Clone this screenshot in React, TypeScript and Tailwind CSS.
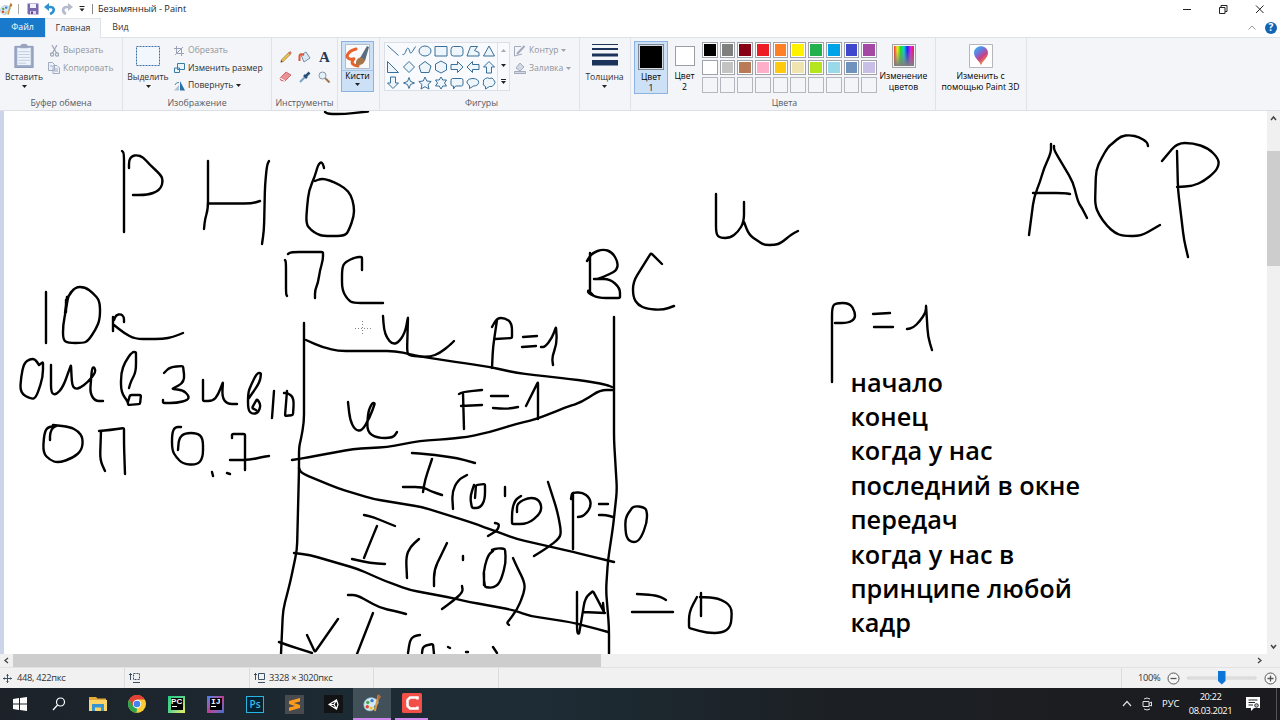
import type { ReactNode } from 'react';

const strokes = [
  'M325 112L328 114H345L368 111.5',
  // PH6
  'M122 151L124 153V232M129 168V160L132 156L137 155L143 157L150 165L161 175L163 181L161 188L156 192L150 194L144 195H133',
  'M208 161V209L205 219L204 229M209 203.5H252L260 201M269 161L267 165L265 185L264 230L262 244',
  'M324 168L323 164L321 162L318 165L315 176L309 190L307 207L306 224L311 230L317 234L323 236H345L349 230L354 216V206L351 195L345 188L334 182L325 179H320L315 181',
  // left column notes
  'M46 292V343M68 297L75 287H85L93 293L100 301V319L96 329L88 341L83 343H68L63 340V325L66 310L68 297L71 292M66 300V312M67 297L65 313',
  'M113 317V331M114 320L116 315L121 314L124 317V322M114 325L124 333L135 339H163L173 337L183 333',
  'M39 365L43 362V377L36 398L31 399L20 393L21 377L24 363L30 359H35L39 365',
  'M51 365V393L56 395L63 387L71 365L72 385L75 389L80 388L88 382L96 372L94 367L92 368L91 380L90 393L95 401H103',
  'M129 388L131 381L136 372V352H132L125 362L121 373V392L128 402V405L140 404L141 395H130L128 402',
  'M164 373L170 367L183 366L185 382L172 389L183 390L189 396L188 400L177 403H163V400',
  'M203 380V401H213L218 395L223 382L222 397L227 404H237',
  'M249 398L260 382L261 373H257L251 385L248 393V410L252 414L258 413L261 405L257 399L252 408L256 410',
  'M274 391L272 418M287 391L285 416L293 415L294 398L288 393H284',
  'M50 440V433L53 427L57 426L47 427L44 435L43 453L50 460L58 463L73 458L82 450L83 438L78 431L70 427L53 425',
  'M99 431L110 430L124 428V445L125 474M101 431L100 460L105 471',
  'M181 427H175L172 433V450L176 457L183 464L197 465L203 458V438L197 433H185L179 438L178 450',
  'M212 472L213 476M227 473L230 474M232 438V434H245V470M230 460H250L262 457L269 456',
  // headings
  'M288 254L291 252H323V260L320 270L318 283L315 290V298M285 260L286 262V294L287 296',
  'M362 270V257H356L345 262L342 268V290L348 300L353 303H383',
  'M590 253V293M587 261L592 253L603 249L612 252L618 262L617 270L610 274L598 279H594M598 279H610L620 288V298H598L588 293V290L593 295',
  'M662 264L651 253L633 282V297L638 305L647 309L663 310L674 306',
  // time axes
  'M304 323V422L301 439L299 447V470L297 550L290 583L283 610L281 654',
  'M614 317V440L617 490L613 527L608 560L606 590L609 627V654',
  // frames
  'M306 340L322 347L338 351H395L423 357L463 363L490 367L517 373L543 376L570 379L593 382L607 385L612 387',
  'M613 390H600L582 402L564 408L537 419L516 424L490 432L467 437L447 439L420 441L387 447L353 449L310 457L292 460',
  'M383 316L384 330L387 338L392 344L398 343L405 333L408 317L407 353L410 356L430 357L440 353L450 345L454 341',
  'M492 327L497 318H505L512 323V338L495 339M497 320L493 347L492 368M523 337L537 336M522 347L536 346M541 347H545L552 338L556 327L557 343L552 357L553 365',
  'M459 394L463 392L482 390M463 393L464 429M461 406L482 405M491 396H508M493 408L507 409L518 407M526 406L538 382V419',
  'M348 402L350 420L355 430L362 431L370 417L375 403H372L368 412L367 432L377 438H393L397 432',
  'M412 453L427 454L457 458L475 463M432 459L425 480L423 492M403 487H423L430 491L442 495',
  'M299 468L301 473L337 488L373 499L422 507L470 522L492 530L517 539L573 552L614 562',
  'M467 475L458 480L452 492L453 509M475 498L476 485L485 484V500L480 508H472L470 497L474 485M505 487V496M495 523L499 524L498 530L488 536',
  'M517 512V503L530 497L540 500L542 512L528 524H512V510L515 500L521 496',
  'M548 482L557 510L561 530L560 538L547 548L534 556',
  'M573 493V549M571 499L572 493L582 492L590 498L591 507L584 516L578 517M599 504H608M599 515H606L613 517',
  'M632 508L635 506L643 507L647 510V523L640 540L633 543L626 538L625 518L632 508',
  'M364 515L373 517L385 522L395 526M377 526L370 543L364 558M352 559L370 563L385 564',
  'M419 539L410 547L406 557L407 578M447 543L434 570V586M463 556V560M462 586L463 592L453 601L442 609',
  'M492 550L498 548L505 549L506 563L500 583L493 588L485 587L483 573L488 555L493 551M484 573V585',
  'M513 558L517 567L525 583L524 593L517 610L507 623L509 625',
  'M294 553L310 555L358 569L385 581L410 590L447 597L470 602L513 610L530 616L570 622L590 627L608 632',
  'M348 595H357L380 608L395 611L406 614M373 613L357 654M307 635L315 652L338 619M279 642L290 646L312 653',
  'M420 635L414 636L410 640L408 653M422 653L423 646L433 644L434 654M448 647L450 648M466 652H468M493 647L497 653',
  'M577 592V633L579 634L582 617L585 598L593 591L604 612L603 603M583 612L605 613',
  'M637 594L653 595L661 597L666 600M632 612H673M701 593V616M700 597L718 598L732 606L731 627L722 633L707 633L689 628V612L697 597',
  // right-hand side
  'M716 194V234L720 238H730L738 232L744 222V202M744 222L749 235L758 241L764 245H775L781 243L792 234L798 231',
  'M1029 235L1034 197L1040 182L1044 168L1051 153V144M1054 146V150L1073 182L1078 202L1082 208L1087 218M1033 193H1064L1070 194',
  'M1148 146L1147 142L1139 137L1130 135L1121 136L1113 143L1108 147L1101 159L1096 170L1095 205L1099 215L1107 226L1115 233L1123 236H1141L1160 225',
  'M1162 161L1177 143H1193L1208 148L1218 158L1219 165L1215 172L1204 181L1193 186L1177 187M1177 151L1178 190L1184 240L1188 257',
  'M832 382V308L835 303H850L855 312V319L848 323H835M873 314L890 313M874 327H893M907 329L913 328L920 321L926 312V305L928 337L932 350',
];

// rounds the joints of a polyline, sharp turns stay sharp
const smooth = (d: string) =>
  d.split('M').filter(Boolean).map((part) => {
    const pts: number[][] = [];
    for (const [, cmd, a, b] of ('L' + part).matchAll(/([LHV])([\d.]+)(?: ([\d.]+))?/g)) {
      const last = pts[pts.length - 1];
      if (cmd === 'L') pts.push([+a, +b]);
      if (cmd === 'H') pts.push([+a, last[1]]);
      if (cmd === 'V') pts.push([last[0], +a]);
    }
    let out = `M${pts[0][0]} ${pts[0][1]}`;
    for (let i = 1; i < pts.length - 1; i++) {
      const [px, py] = pts[i - 1];
      const [x, y] = pts[i];
      const [nx, ny] = pts[i + 1];
      const la = Math.hypot(x - px, y - py);
      const lb = Math.hypot(nx - x, ny - y);
      const cos = ((x - px) * (nx - x) + (y - py) * (ny - y)) / (la * lb);
      const reach = cos > 0.3 ? 8 : 1.5;
      const ta = Math.min(reach, la / 2) / la;
      const tb = Math.min(reach, lb / 2) / lb;
      out += `L${x + (px - x) * ta} ${y + (py - y) * ta}Q${x} ${y} ${x + (nx - x) * tb} ${y + (ny - y) * tb}`;
    }
    const end = pts[pts.length - 1];
    return out + `L${end[0]} ${end[1]}`;
  }).join('');

const notes = ['начало', 'конец', 'когда у нас', 'последний в окне', 'передач', 'когда у нас в', 'принципе любой', 'кадр'];

const palette = [
  '#000000', '#7f7f7f', '#880015', '#ed1c24', '#ff7f27', '#fff200', '#22b14c', '#00a2e8', '#3f48cc', '#a349a4',
  '#ffffff', '#c3c3c3', '#b97a57', '#ffaec9', '#ffc90e', '#efe4b0', '#b5e61d', '#99d9ea', '#7092be', '#c8bfe7',
];

const shapes = [
  'M2 2L13 12',
  'M1 11C5 12 4 3 7 5C9 8 8 12 11 8L14 3',
  'M1.5 7.5A6 5 0 1 0 13.5 7.5A6 5 0 1 0 1.5 7.5',
  'M1.5 3H13.5V12.5H1.5Z',
  'M4 3H11Q13.5 3 13.5 6V10Q13.5 12.5 11 12.5H4Q1.5 12.5 1.5 10V6Q1.5 3 4 3',
  'M5 3H12L9 7L13.5 9V12.5H1.5Z',
  'M7.5 2.5L13 12.5H2Z',
  'M2 2V13H13Z',
  'M7.5 2L13 7.5L7.5 13L2 7.5Z',
  'M7.5 2L13.5 6.5L11.5 13H3.5L1.5 6.5Z',
  'M7.5 1.5L13 4.5V10.5L7.5 13.5L2 10.5V4.5Z',
  'M1.5 5H8V2L13.5 7.5L8 13V10H1.5Z',
  'M13.5 5H7V2L1.5 7.5L7 13V10H13.5Z',
  'M5 13.5V7.5H2L7.5 2L13 7.5H10V13.5Z',
  'M5 1.5V7.5H2L7.5 13L13 7.5H10V1.5Z',
  'M7.5 2L9 6L13 7.5L9 9L7.5 13L6 9L2 7.5L6 6Z',
  'M7.5 1.5L9.3 5.5L13.7 6L10.5 9L11.5 13.5L7.5 11.2L3.5 13.5L4.5 9L1.3 6L5.7 5.5Z',
  'M7.5 1.5L9.3 4.5H13L11 7.5L13 10.5H9.3L7.5 13.5L5.7 10.5H2L4 7.5L2 4.5H5.7Z',
  'M3 3H12Q13.5 3 13.5 5V8.5Q13.5 10.5 12 10.5H6L4 13.5V10.5H3Q1.5 10.5 1.5 8.5V5Q1.5 3 3 3',
  'M4 10C-1 7 2 3 7.5 3C15 3 15 10.5 8 10.5L4 13Z',
  'M4 3Q6 1.5 8 3Q11 1.5 12 4Q15 7 12.5 9Q11 12 8 11L4 13.5V11Q.5 10 2 7Q1 4 4 3',
];

const Caret = ({ color = '#222' }: { color?: string }) => (
  <svg width="5" height="3" viewBox="0 0 5 3"><path d="M0 0H5L2.5 3Z" fill={color} /></svg>
);

const Group = ({ label, className, children }: { label?: string; className: string; children: ReactNode }) => (
  <div className={`flex h-full shrink-0 flex-col border-r border-[#dfe2e8] pt-[4px] ${className}`}>
    <div className="flex h-[55px]">{children}</div>
    <div className="h-[12px] text-center text-[8.8px] leading-[12px] text-[#555a62]">{label}</div>
  </div>
);

const Row = ({ icon, text, off, caret }: { icon: ReactNode; text: string; off?: boolean; caret?: boolean }) => (
  <div className={`flex h-[17.5px] items-center gap-[3px] whitespace-nowrap ${off ? 'text-[#92959e]' : 'text-[#2d3036]'}`}>
    <span className="flex w-[12px] justify-center">{icon}</span>
    <span>{text}</span>
    {caret && <Caret color={off ? '#a0a3aa' : '#222'} />}
  </div>
);

const Palette = ({ size }: { size: number }) => (
  <svg width={size} height={size} viewBox="0 0 20 20">
    <path d="M1 13C0 7 5 3 10 4C15 5 18 9 15 11C12 12 11 12 12 15C11 19 2 19 1 13Z" fill="#d3e8f3" stroke="#8ab0c4" strokeWidth=".7" />
    <circle cx="5" cy="9" r="1.8" fill="#4da64d" />
    <circle cx="9.5" cy="7" r="1.8" fill="#3979cf" />
    <circle cx="4.5" cy="13.5" r="1.8" fill="#dd4436" />
    <circle cx="8.500" cy="14.8" r="1.7" fill="#efc02c" />
    <path d="M16.5 1L12.5 18" stroke="#d89545" strokeWidth="2.2" />
    <path d="M15 5L16.5 0L19 3L17 6Z" fill="#b56c37" />
  </svg>
);

const TitleBar = () => (
  <div className="flex h-[18px] items-center bg-white pr-[14px]">
    <div className="flex w-[98px] items-center">
      <Palette size={13} />
      <div className="ml-[5px] h-[10px] w-px bg-[#aaa]" />
      <svg className="ml-[8px]" width="12" height="12" viewBox="0 0 12 12">
        <path d="M.5 .5H11.5V11.5H1.5L.5 10.5Z" fill="#7a68ad" />
        <path d="M3 1H9V5H3Z" fill="#f4f2fa" />
        <path d="M3 8H9V11.5H3Z" fill="#d8d2ea" />
        <path d="M4 8.5H6V11H4Z" fill="#5a4a88" />
      </svg>
      <svg className="ml-[5px]" width="12" height="12" viewBox="0 0 12 12">
        <path d="M3 4H6C11 4 11 9 6 11" fill="none" stroke="#2e92d0" strokeWidth="2.6" />
        <path d="M0 4L5 0V8Z" fill="#2e92d0" />
      </svg>
      <svg className="ml-[5px]" width="12" height="12" viewBox="0 0 12 12">
        <path d="M9 4H6C1 4 1 9 5 11" fill="none" stroke="#b4bccb" strokeWidth="2.6" />
        <path d="M12 4L7 0V8Z" fill="#b4bccb" />
      </svg>
      <svg className="ml-[6px]" width="6" height="6" viewBox="0 0 6 6"><path d="M.5 .5H5.500" stroke="#222" /><path d="M.5 2.5H5.5L3 5.5Z" fill="#222" /></svg>
      <div className="ml-[7px] h-[10px] w-px bg-[#888]" />
    </div>
    <div className="flex-1 text-[9.2px] leading-[18px] text-[#1d1d1d]">Безымянный - Paint</div>
    <svg width="84" height="10" viewBox="0 0 84 10" fill="none" stroke="#222" strokeWidth="1">
      <path d="M1 5.5H9M37.5 3.5H43V9.5H37.5ZM39 3.5V1.5H45V7.5H43M74 1.5L81.5 9M81.5 1.5L74 9" />
    </svg>
  </div>
);

const Tabs = () => (
  <div className="flex h-[20px] items-end border-b border-[#dfe2e8] bg-white text-[8.8px] leading-[19px]">
    <div className="h-[19px] w-[45px] bg-[#1979ca] text-center text-white">Файл</div>
    <div className="-mb-px h-[20px] w-[56px] border-x border-t border-[#dfe2e8] bg-[#f5f6f9] text-center text-[#333]">Главная</div>
    <div className="h-[19px] w-[39px] text-center text-[#333]">Вид</div>
    <div className="flex h-[19px] flex-1 items-center justify-end gap-[9px] pr-[3px]">
      <svg width="8" height="5" viewBox="0 0 8 5" fill="none" stroke="#999"><path d="M.5 4.5L4 1L7.5 4.5" /></svg>
      <div className="flex h-[12px] w-[12px] items-center justify-center rounded-full bg-[#1464b4] text-[10px] font-bold text-white">?</div>
    </div>
  </div>
);

const Ribbon = () => (
  <div className="flex h-[73px] border-b border-[#dcdfe5] bg-[#f4f5f8] text-[8.6px] leading-[11px]">
    <Group label="Буфер обмена" className="w-[123px]">
      <div className="flex w-[48px] flex-col items-center">
        <svg className="mt-px" width="20" height="25" viewBox="0 0 20 26">
          <path d="M.5 3.5H19.5V25.5H.5Z" fill="#9ba9c6" stroke="#8d9ab8" />
          <path d="M3 5H17V23H3Z" fill="#eef3fb" />
          <path d="M6 3.5Q6 1 10 .8Q14 1 14 3.5V5.5H6Z" fill="#9aa5bd" />
          <path d="M4 9H16M4 12H16M4 15H16M4 18H16M4 21H12" stroke="#c1cce0" />
        </svg>
        <span className="mt-[4px] whitespace-nowrap text-[#2d3036]">Вставить</span>
        <span className="mt-[2px]"><Caret /></span>
      </div>
      <div>
        <Row off text="Вырезать" icon={
          <svg width="9" height="12" viewBox="0 0 9 12" fill="none" stroke="#9ea5b8" strokeWidth="1.2"><path d="M2 0L6.5 8M7 0L2.5 8" /><circle cx="2" cy="9.5" r="1.6" /><circle cx="7" cy="9.5" r="1.6" /></svg>
        } />
        <Row off text="Копировать" icon={
          <svg width="12" height="12" viewBox="0 0 12 12" fill="#edf1f8" stroke="#a0aac0"><path d="M.5 .5H4.5L6.5 2.5V8.5H.5ZM5 3.5H9L11.5 6V11.5H5Z" /><path d="M6.5 7H10M6.5 9H10M2 4H4" /></svg>
        } />
      </div>
    </Group>

    <Group label="Изображение" className="w-[149px]">
      <div className="flex w-[50px] flex-col items-center">
        <svg className="mt-[4px]" width="24" height="20" viewBox="0 0 24 20"><path d="M.5 .5H23.5V19.5H.5Z" fill="#f1f7fd" stroke="#3c6ea5" strokeDasharray="2 1" /></svg>
        <span className="mt-[6px] whitespace-nowrap text-[#2d3036]">Выделить</span>
        <span className="mt-[2px]"><Caret /></span>
      </div>
      <div>
        <Row off text="Обрезать" icon={
          <svg width="10" height="10" viewBox="0 0 10 10" fill="none" stroke="#9aa2b8"><path d="M2.5 0V7.5H10M0 2.5H7.5V10M1 9L9 1" /></svg>
        } />
        <Row text="Изменить размер" icon={
          <svg width="11" height="10" viewBox="0 0 11 10" fill="#e9f4fc" stroke="#3a7ca8"><path d="M3.5 .5H10.5V6.5H3.5ZM.5 5H5.5V9.5H.5Z" /></svg>
        } />
        <Row text="Повернуть" caret icon={
          <svg width="11" height="10" viewBox="0 0 11 10"><path d="M0 9.5L5 4V9.5Z" fill="#b3c2d0" /><path d="M6 0L11 9.5H6Z" fill="#2573ad" /><path d="M1 4Q2 1 5 1.5" fill="none" stroke="#58859f" /></svg>
        } />
      </div>
    </Group>

    <Group label="Инструменты" className="w-[66px]">
      <div className="grid h-[44px] w-[62px] grid-cols-3 place-items-center pl-[4px] pt-[4px]">
        <svg width="12" height="12" viewBox="0 0 12 12"><path d="M2 10L10 2" stroke="#8d7330" strokeWidth="3" /><path d="M2 10L10 2" stroke="#f1c550" strokeWidth="1.8" /><path d="M9 3L11 1" stroke="#cc7c77" strokeWidth="2.5" /><path d="M.5 11.5L1 9L3 11Z" fill="#4a4036" /></svg>
        <svg width="13" height="12" viewBox="0 0 13 12"><path d="M3 4L8 1L12 7L6 11Z" fill="#d9e8f3" stroke="#7291a9" /><path d="M1.5 10V5Q2 2 6 4" fill="none" stroke="#df5536" strokeWidth="2" /></svg>
        <span className="font-['Liberation_Serif'] text-[15px] font-bold leading-[14px] text-[#243956]">A</span>
        <svg width="13" height="11" viewBox="0 0 13 11"><path d="M1 7L7 1L12 4L6 10L2 9.5Z" fill="#eb9196" stroke="#ca6c72" /><path d="M1 7L6 10" stroke="#fff" /></svg>
        <svg width="12" height="12" viewBox="0 0 12 12"><path d="M1 11L7 5" stroke="#7aa4c4" strokeWidth="2" /><path d="M5 4L8 7M7 5L10.5 1.5" stroke="#25517a" strokeWidth="2.500" /></svg>
        <svg width="12" height="12" viewBox="0 0 12 12"><path d="M7 7L11.5 11.5" stroke="#a1764c" strokeWidth="2" /><circle cx="4.5" cy="4.5" r="3.5" fill="#e4f1fb" stroke="#8998a5" /></svg>
      </div>
    </Group>

    <Group className="w-[42px] pl-[3px]">
      <div className="mt-[-1px] flex h-[51px] w-[33px] flex-col items-center border border-[#8cb3df] bg-[#cce0f6]">
        <svg className="mt-[2px] shrink-0" width="25" height="25" viewBox="0 0 25 25">
          <path d="M.5 .5H24.5V24.5H.5Z" fill="#f9fafb" stroke="#b5bcc7" />
          <path d="M11 5C3 7 1 12 3 14C6 17 11 13 8 16Q5 21 13 22" fill="none" stroke="#e8612b" strokeWidth="3" strokeLinecap="round" />
          <path d="M15 14L22 2L24 3L20 17Z" fill="#596d80" />
          <path d="M11 21Q10 15 16 13L20 16Q19 22 11 21Z" fill="#a77447" />
        </svg>
        <span className="mt-[1px] w-full border-t border-[#a4c4e8] text-center">Кисти</span>
        <span className="mt-[1px]"><Caret /></span>
      </div>
    </Group>

    <Group label="Фигуры" className="w-[200px] pl-[4px]">
      <div className="flex h-[49px] w-[126px] border border-[#dbe0e8] bg-[#f8fafd]">
        <div className="grid w-[113px] grid-cols-7">
          {shapes.map((d) => (
            <svg key={d} width="16" height="16" viewBox="-.5 -.5 16 16" fill="#eef6fc" stroke="#396f98"><path d={d} /></svg>
          ))}
        </div>
        <div className="flex w-[12px] flex-col items-center justify-around border-l border-[#dbe0e8]">
          <span className="rotate-180"><Caret color="#aaa" /></span>
          <Caret />
          <span className="border-t border-[#222] pt-px"><Caret /></span>
        </div>
      </div>
      <div className="ml-[4px]">
        <Row off text="Контур" caret icon={
          <svg width="12" height="12" viewBox="0 0 12 12" fill="none" stroke="#a3aabb"><path d="M7 1.5H.5V11L8 9" /><path d="M3 9L10.5 1" strokeWidth="2" /></svg>
        } />
        <Row off text="Заливка" caret icon={
          <svg width="12" height="12" viewBox="0 0 12 12" fill="#d3d9e6" stroke="#a3aabb"><path d="M2 6L6 1L10 5L6 9ZM.5 9.5H11.5V11.5H.5Z" /></svg>
        } />
      </div>
    </Group>

    <Group className="w-[51px]">
      <div className="flex w-[49px] flex-col items-center">
        <svg className="mt-[2px]" width="26" height="22" viewBox="0 0 26 22" fill="#1b3259"><path d="M0 0H26V1H0ZM0 4H26V6H0ZM0 9.5H26V12.5H0ZM0 16H26V21.5H0Z" /></svg>
        <span className="mt-[6px] text-[#2d3036]">Толщина</span>
        <span className="mt-[2px]"><Caret /></span>
      </div>
    </Group>

    <Group label="Цвета" className="w-[305px] pl-[3px]">
      <div className="mt-[-1px] flex h-[53px] w-[34px] flex-col items-center border border-[#8cb3df] bg-[#cce0f6] pt-[2px]">
        <div className="h-[26px] w-[26px] shrink-0 border border-[#7e8794] bg-black outline-1 -outline-offset-2 outline-[#d5dbe2]" />
        <span className="mt-[2px] text-center leading-[10.5px]">Цвет<br />1</span>
      </div>
      <div className="flex w-[33px] flex-col items-center pt-[4px]">
        <div className="h-[20px] w-[20px] shrink-0 border border-[#999ea5] bg-white" />
        <span className="mt-[5px] text-center leading-[10.5px]">Цвет<br />2</span>
      </div>
      <div className="ml-[1px] grid h-[51px] w-[175px] grid-cols-10 grid-rows-3 gap-[2px]">
        {palette.map((color) => (
          <div key={color} className="border border-[#a0a4aa] bg-white p-px">
            <div className="h-full" style={{ background: color }} />
          </div>
        ))}
        {Array.from({ length: 10 }, (_, i) => <div key={i} className="border border-[#b4b8be]" />)}
      </div>
      <div className="flex w-[53px] flex-col items-center pt-[2px]">
        <div className="h-[24px] w-[24px] shrink-0 border border-[#a5a5a5] p-px">
          <div className="h-full bg-[linear-gradient(to_bottom,transparent_20%,#808080),linear-gradient(to_right,#e33,#ee2,#2d2,#1cd,#22e,#d2d,#e23)]" />
        </div>
        <span className="mt-[3px] text-center leading-[10.5px]">Изменение<br />цветов</span>
      </div>
    </Group>

    <Group className="w-[91px]">
      <div className="flex w-[89px] flex-col items-center pt-[2px]">
        <svg width="24" height="24" viewBox="0 0 24 24">
          <defs>
            <linearGradient id="drop" x1="0" y1="0" x2=".6" y2="1"><stop stopColor="#27c4ed" /><stop offset=".4" stopColor="#6e73dd" /><stop offset=".65" stopColor="#c84087" /><stop offset="1" stopColor="#fa9a27" /></linearGradient>
          </defs>
          <path d="M.5 .5H23.5V23.5H.5Z" fill="#fff" stroke="#b4b8be" />
          <path d="M12 21.5C11 17 5 14 5 9C5 0 19 0 19 9C19 14 13 17 12 21.5Z" fill="url(#drop)" />
        </svg>
        <span className="mt-[3px] whitespace-nowrap text-center leading-[10.5px]">Изменить с<br />помощью Paint 3D</span>
      </div>
    </Group>
  </div>
);

const Canvas = () => (
  <div className="flex h-[543px]">
    <div className="w-[4px] bg-[#ccd5e8]" />
    <div className="relative flex-1 overflow-hidden bg-white">
      <svg className="absolute inset-0" width="1263" height="543" viewBox="4 111 1263 543" fill="none" stroke="#000" strokeWidth="2.4" strokeLinecap="round" strokeLinejoin="round">
        {strokes.map((d) => <path key={d} d={smooth(d)} />)}
        <path d="M355 328.5H371M362.5 321V336" stroke="#888" strokeWidth="1" strokeLinecap="butt" strokeDasharray="1 2" />
      </svg>
      <div className="absolute left-[846.5px] top-[253.500px] whitespace-nowrap font-['Open_Sans','Noto_Sans',sans-serif] text-[25.3px] font-semibold leading-[34.4px] text-black">
        {notes.map((line) => <div key={line}>{line}</div>)}
      </div>
    </div>
    <div className="flex w-[13px] flex-col items-center justify-between bg-[#f0f0f0] py-[4px]">
      <svg width="7" height="6" viewBox="0 0 7 6" fill="none" stroke="#444" strokeWidth="1.5"><path d="M1 5L3.5 2L6 5" /></svg>
      <div className="mt-[30px] h-[115px] w-full bg-[#cdcdcd]" />
      <div className="flex-1" />
      <svg width="7" height="6" viewBox="0 0 7 6" fill="none" stroke="#444" strokeWidth="1.5"><path d="M1 1L3.5 4L6 1" /></svg>
    </div>
  </div>
);

const StatusBar = () => (
  <>
    <div className="flex h-[13px] items-center bg-[#f0f0f0]">
      <svg className="mx-[3px]" width="7" height="7" viewBox="0 0 7 7" fill="none" stroke="#444" strokeWidth="1.3"><path d="M5 1L2 3.5L5 6" /></svg>
      <div className="h-full w-[588px] bg-[#cdcdcd]" />
      <div className="flex-1" />
      <svg className="mr-[17px]" width="7" height="7" viewBox="0 0 7 7" fill="none" stroke="#444" strokeWidth="1.3"><path d="M2 1L5 3.5L2 6" /></svg>
    </div>
    <div className="flex h-[21px] items-center border-t border-[#e2e2e2] bg-[#f1f1f1] text-[9.3px] tracking-[-0.3px] text-[#333]">
      <div className="flex h-full w-[125px] items-center gap-[5px] border-r border-[#dcdcdc] pl-[3px]">
        <svg width="9" height="9" viewBox="0 0 9 9" fill="none" stroke="#3c5066"><path d="M4.5 0V9M0 4.5H9M3.5 1.5H5.5M3.5 7.5H5.5M1.5 3.5V5.5M7.5 3.5V5.5" /></svg>
        <span>448, 422пкс</span>
      </div>
      <div className="flex h-full w-[125px] items-center border-r border-[#dcdcdc] pl-[4px]">
        <svg width="11" height="10" viewBox="0 0 11 10" fill="none" stroke="#3c5066"><path d="M1.5 0V7M0 1.5H3M4 9.5H11" /><path d="M4.5 .5H10.5V6.5H4.5Z" strokeDasharray="2 1" /></svg>
      </div>
      <div className="flex h-full w-[124px] items-center gap-[4px] border-r border-[#dcdcdc] pl-[4px]">
        <svg width="11" height="10" viewBox="0 0 11 10" fill="none" stroke="#3c5066"><path d="M1.5 0V7M0 1.5H3M4 9.5H11M4.5 .5H10.5V6.5H4.5Z" /></svg>
        <span>3328 × 3020пкс</span>
      </div>
      <div className="h-full w-[125px] border-r border-[#dcdcdc]" />
      <div className="h-full flex-1 border-r border-[#dcdcdc]" />
      <div className="flex h-full w-[158px] items-center pl-[16px]">
        <span className="w-[29px]">100%</span>
        <svg width="13" height="13" viewBox="0 0 13 13" fill="#f8f8f8" stroke="#555"><circle cx="6.5" cy="6.5" r="5.5" /><path d="M3.5 6.5H9.5" strokeWidth="1.3" /></svg>
        <svg className="ml-[7px]" width="70" height="14" viewBox="0 0 70 14"><path d="M.5 6H69V8H.5Z" fill="#e8e8e8" stroke="#d2d2d2" /><path d="M31 0H38.5V10L34.75 13.5L31 10Z" fill="#0c76d6" /></svg>
        <svg className="ml-[7px]" width="13" height="13" viewBox="0 0 13 13" fill="#f8f8f8" stroke="#555"><circle cx="6.5" cy="6.5" r="5.5" /><path d="M3.5 6.5H9.5M6.5 3.5V9.5" strokeWidth="1.3" /></svg>
      </div>
    </div>
  </>
);

const Task = ({ children }: { children: ReactNode }) => (
  <div className="flex h-full w-[39.25px] items-center justify-center">{children}</div>
);

const Taskbar = () => (
  <div className="flex h-[32px] bg-[linear-gradient(to_right,#1d2229,#1c2b34_30%,#1d2c35_42%,#1c2024_65%,#1b1b1f)] text-[9.3px] text-white">
    <Task><svg width="14" height="14" viewBox="0 0 14 14" fill="#fff"><path d="M0 2L6 1V6.5H0ZM7 .9L14 0V6.5H7ZM0 7.5H6V13L0 12ZM7 7.5H14V14L7 13Z" /></svg></Task>
    <Task><svg width="14" height="14" viewBox="0 0 14 14" fill="none" stroke="#fff" strokeWidth="1.2"><circle cx="8.5" cy="5" r="4" /><path d="M5.5 8L1 13" /></svg></Task>
    <Task><svg width="18" height="16" viewBox="0 0 18 16"><path d="M0 1H7L8.5 2.5H17V15H0Z" fill="#e6aa36" /><path d="M0 4H18V15H0Z" fill="#fbd46a" /><path d="M3 8H15V15H12V11.5H6V15H3Z" fill="#3894d1" /></svg></Task>
    <Task>
      <svg width="18" height="18" viewBox="0 0 18 18">
        <circle cx="9" cy="9" r="9" fill="#fbcc34" />
        <path d="M9 9L4.7 11.5L1.2 4.5A9 9 0 0 1 16.8 4.5H9Z" fill="#e24135" />
        <path d="M1.2 4.5L5.1 11.25L9 13.5L8.5 18A9 9 0 0 1 1.2 4.5Z" fill="#2da550" />
        <circle cx="9" cy="9" r="4.2" fill="#fff" /><circle cx="9" cy="9" r="3.3" fill="#4285ed" />
      </svg>
    </Task>
    <Task>
      <div className="h-[17px] w-[17px] bg-linear-to-br from-[#24cf82] via-[#55d48c] to-[#eef155] p-[2.5px]">
        <div className="flex h-full flex-col items-center bg-black font-['Liberation_Sans'] text-[8px] font-bold leading-[8px]">PC<div className="mr-[4px] h-px w-[5px] bg-white" /></div>
      </div>
    </Task>
    <Task>
      <div className="h-[17px] w-[17px] bg-linear-to-br from-[#1682ef] via-[#bb3c92] to-[#276ed4] p-[2.5px]">
        <div className="flex h-full flex-col items-center bg-black font-['Liberation_Mono'] text-[8px] font-bold leading-[8px]">IJ<div className="mr-[4px] h-px w-[5px] bg-white" /></div>
      </div>
    </Task>
    <Task><div className="h-[17px] w-[18px] border border-[#27b6e4] bg-[#062331] text-center font-['Open_Sans'] text-[10px] font-semibold leading-[15px] text-[#35bcea]">Ps</div></Task>
    <Task><div className="flex h-[19px] w-[19px] items-center justify-center bg-[#484a4d]"><svg width="11" height="13" viewBox="0 0 11 13"><path d="M0 3L11 0V3.5L5 5L11 7V10L0 13V9.5L6 8L0 6Z" fill="#fc9a1b" /></svg></div></Task>
    <Task>
      <div className="flex h-[18px] w-[19px] items-center justify-center bg-[#111315]">
        <svg width="11" height="11" viewBox="0 0 11 11" fill="none" stroke="#fff" strokeWidth="1.2"><path d="M1 5.5L8.5 1L10 5.5L8.5 10ZM1 5.5H6L8.5 1M6 5.5L8.5 10" /></svg>
      </div>
    </Task>
    <div className="flex w-[38px] items-center justify-center border-b-2 border-[#ce86ec] bg-[#415059]"><Palette size={19} /></div>
    <div className="ml-[4px] flex w-[33px] items-center justify-center border-b-2 border-[#ce86ec]">
      <svg width="20" height="20" viewBox="0 0 20 20"><rect width="20" height="20" rx="1.5" fill="#f14f48" /><path d="M15.5 6.5V4.5H8L5.5 7V13L8 15.5H15.5V13.5" fill="none" stroke="#fff" strokeWidth="2.5" /></svg>
    </div>
    <div className="flex-1" />
    <svg className="mt-[12px]" width="10" height="7" viewBox="0 0 10 7" fill="none" stroke="#ddd" strokeWidth="1.2"><path d="M1 6L5 1.5L9 6" /></svg>
    <svg className="ml-[10px] mt-[9px]" width="11" height="14" viewBox="0 0 11 14" fill="none" stroke="#ddd"><path d="M1 4.5H7V9.5H1ZM7 6.5L9.5 5V9L7 8M2 2Q5 0 8 2M2 12Q5 14 8 12" /></svg>
    <span className="ml-[9px] w-[20px] text-[9.5px] leading-[31px]">РУС</span>
    <div className="ml-[6px] w-[45px] whitespace-nowrap pt-[2px] text-center leading-[14px] tracking-[-0.4px]">20:22<br />08.03.2021</div>
    <svg className="ml-[13px] mt-[9px]" width="14" height="14" viewBox="0 0 14 14"><path d="M0 0H14V11H8L5 14V11H0Z" fill="#fff" /><path d="M2.5 3H11.5M2.5 5.5H9M2.5 8H7" stroke="#222" /><circle cx="10.5" cy="8.5" r="1.8" fill="#bbb" stroke="#333" /></svg>
    <div className="ml-[16px] mr-[3px] w-px bg-[#555]" />
  </div>
);

const App = () => {
  return (
    <div className="flex h-[720px] w-[1280px] flex-col overflow-hidden bg-white font-['Open_Sans','Noto_Sans',sans-serif]">
      <TitleBar />
      <Tabs />
      <Ribbon />
      <Canvas />
      <StatusBar />
      <Taskbar />
    </div>
  );
};

export default App;
